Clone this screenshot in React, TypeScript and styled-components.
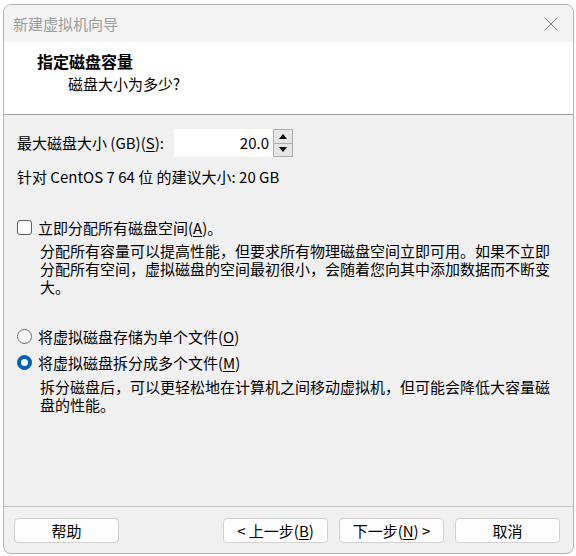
import React from "react";
import styled, { createGlobalStyle } from "styled-components";

const Global = createGlobalStyle`
  html, body { margin: 0; padding: 0; background: #ffffff; }
  body { font-family: "Noto Sans CJK SC", "Noto Sans", sans-serif; font-size: 15px; color: #000; }
  * { box-sizing: border-box; }
`;

const Window = styled.div`
  margin: 4px 0 0 3px;
  width: 571px;
  height: 550px;
  border: 1px solid #b3b3b3;
  border-radius: 8px;
  overflow: hidden;
  display: flex;
  flex-direction: column;
  background: #f0f0f0;
`;

const TitleBar = styled.div`
  height: 37px;
  flex: 0 0 37px;
  background: #f3f3f3;
  display: flex;
  align-items: center;
  padding: 0 15px 0 9px;
`;

const TitleText = styled.div`
  flex: 1;
  color: #9b9b9b;
  font-size: 15px;
  line-height: 20px;
`;

const Header = styled.div`
  flex: 0 0 73px;
  background: #ffffff;
  border-bottom: 1px solid #a0a0a0;
  padding: 9px 0 0 33px;
`;

const HeaderTitle = styled.div`
  font-size: 16px;
  font-weight: 700;
  line-height: 20px;
`;

const HeaderSub = styled.div`
  font-size: 15px;
  line-height: 20px;
  margin-top: 3px;
  padding-left: 31px;
`;

const Body = styled.div`
  flex: 1;
  padding: 14px 0 0 13px;
  display: flex;
  flex-direction: column;
`;

const SpinRow = styled.div`
  display: flex;
  align-items: center;
  height: 28px;
`;

const Label = styled.span`
  flex: 0 0 157px;
  line-height: 20px;
`;

const Key = styled.span`
  text-decoration: underline;
  text-underline-offset: 2px;
`;

const SpinInput = styled.div`
  width: 99px;
  height: 28px;
  background: #ffffff;
  text-align: right;
  padding-right: 4px;
  line-height: 28px;
`;

const SpinButtons = styled.div`
  width: 20px;
  height: 28px;
  display: flex;
  flex-direction: column;
`;

const SpinButton = styled.div`
  flex: 1;
  border: 1px solid #adadad;
  background: #e5e5e5;
  display: flex;
  align-items: center;
  justify-content: center;
  & + & { border-top: none; }
`;

const Note = styled.div`
  margin-top: 10px;
  line-height: 20px;
`;

const OptionRow = styled.div<{ $top: number }>`
  display: flex;
  align-items: center;
  height: 20px;
  margin-top: ${(p) => p.$top}px;
  gap: 6px;
`;

const CheckBox = styled.span`
  width: 15px;
  height: 15px;
  border: 1px solid #5c5c5c;
  border-radius: 3px;
  background: #fbfbfb;
`;

const Radio = styled.span<{ $checked?: boolean }>`
  width: 15px;
  height: 15px;
  border-radius: 50%;
  display: flex;
  align-items: center;
  justify-content: center;
  background: ${(p) => (p.$checked ? "#005fb8" : "#f7f7f7")};
  border: 1px solid ${(p) => (p.$checked ? "#005fb8" : "#6b6b6b")};
  &::after {
    content: "";
    display: ${(p) => (p.$checked ? "block" : "none")};
    width: 7px;
    height: 7px;
    border-radius: 50%;
    background: #ffffff;
  }
`;

const Desc = styled.div<{ $top: number }>`
  margin: ${(p) => p.$top}px 0 0 23px;
  width: 520px;
  line-height: 18px;
`;

const Footer = styled.div`
  flex: 0 0 47px;
  border-top: 1px solid #c4c4c4;
  padding: 11px 13px 0 10px;
  display: flex;
  align-items: flex-start;
`;

const Button = styled.button`
  width: 105px;
  height: 25px;
  border: 1px solid #d0d0d0;
  border-radius: 4px;
  background: #fdfdfd;
  font-family: inherit;
  font-size: 15px;
  color: #000;
  padding: 0;
  line-height: 23px;
`;

const ButtonGroup = styled.div`
  margin-left: auto;
  display: flex;
  gap: 11px;
`;

export default function App() {
  return (
    <>
      <Global />
      <Window>
        <TitleBar>
          <TitleText>新建虚拟机向导</TitleText>
          <svg width="14" height="14" viewBox="0 0 14 14">
            <path d="M0.5 0.5 L13.5 13.5 M13.5 0.5 L0.5 13.5" stroke="#7a7a7a" strokeWidth="1" fill="none" />
          </svg>
        </TitleBar>
        <Header>
          <HeaderTitle>指定磁盘容量</HeaderTitle>
          <HeaderSub>磁盘大小为多少?</HeaderSub>
        </Header>
        <Body>
          <SpinRow>
            <Label>
              最大磁盘大小 (GB)(<Key>S</Key>):
            </Label>
            <SpinInput>20.0</SpinInput>
            <SpinButtons>
              <SpinButton>
                <svg width="8" height="5" viewBox="0 0 8 5">
                  <path d="M4 0 L8 5 L0 5 Z" fill="#000" />
                </svg>
              </SpinButton>
              <SpinButton>
                <svg width="8" height="5" viewBox="0 0 8 5">
                  <path d="M0 0 L8 0 L4 5 Z" fill="#000" />
                </svg>
              </SpinButton>
            </SpinButtons>
          </SpinRow>
          <Note>针对 CentOS 7 64 位 的建议大小: 20 GB</Note>
          <OptionRow $top={30}>
            <CheckBox />
            <span>
              立即分配所有磁盘空间(<Key>A</Key>)。
            </span>
          </OptionRow>
          <Desc $top={5}>
            分配所有容量可以提高性能，但要求所有物理磁盘空间立即可用。如果不立即分配所有空间，虚拟磁盘的空间最初很小，会随着您向其中添加数据而不断变大。
          </Desc>
          <OptionRow $top={30}>
            <Radio />
            <span>
              将虚拟磁盘存储为单个文件(<Key>O</Key>)
            </span>
          </OptionRow>
          <OptionRow $top={6}>
            <Radio $checked />
            <span>
              将虚拟磁盘拆分成多个文件(<Key>M</Key>)
            </span>
          </OptionRow>
          <Desc $top={6}>
            拆分磁盘后，可以更轻松地在计算机之间移动虚拟机，但可能会降低大容量磁盘的性能。
          </Desc>
        </Body>
        <Footer>
          <Button>帮助</Button>
          <ButtonGroup>
            <Button>
              &lt; 上一步(<Key>B</Key>)
            </Button>
            <Button>
              下一步(<Key>N</Key>) &gt;
            </Button>
            <Button>取消</Button>
          </ButtonGroup>
        </Footer>
      </Window>
    </>
  );
}
